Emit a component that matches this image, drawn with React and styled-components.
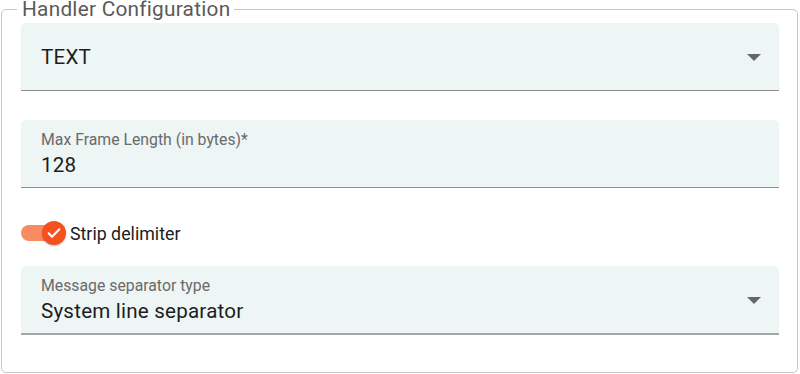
import React from "react";
import styled, { createGlobalStyle } from "styled-components";

const GlobalStyle = createGlobalStyle`
  html, body {
    margin: 0;
    padding: 0;
    background: #fff;
    font-family: Roboto, "Liberation Sans", sans-serif;
  }
`;

function App() {
  return (
    <Page>
      <GlobalStyle />
      <Group>
        <Legend>Handler Configuration</Legend>
        <Field>
          <Value $plain>TEXT</Value>
          <Arrow />
        </Field>

        <Field $gap={29}>
          <Label>Max Frame Length (in bytes)*</Label>
          <Value>128</Value>
        </Field>

        <SwitchRow>
          <Track>
            <Thumb>
              <svg width="16" height="16" viewBox="0 0 24 24">
                <path
                  d="M4 12.5l5 5L20 6.5"
                  fill="none"
                  stroke="#fff"
                  strokeWidth="3.2"
                  strokeLinecap="round"
                  strokeLinejoin="round"
                />
              </svg>
            </Thumb>
          </Track>
          <SwitchText>Strip delimiter</SwitchText>
        </SwitchRow>

        <Field $thick>
          <Label>Message separator type</Label>
          <Value>System line separator</Value>
          <Arrow />
        </Field>
      </Group>
    </Page>
  );
}

export default App;

const Page = styled.div`
  padding: 0 2px 0 1px;
  width: 800px;
  box-sizing: border-box;
`;

const Group = styled.fieldset`
  margin: 0;
  padding: 5px 18px 37px 19px;
  border: 1px solid #c6c6c6;
  border-radius: 5px;
  min-width: 0;
`;

const Legend = styled.legend`
  margin-left: -4px;
  padding: 0 4px 0 5px;
  font-size: 20.8px;
  line-height: 18px;
  letter-spacing: 0.25px;
  color: #5a5a5a;
`;

const Field = styled.div`
  position: relative;
  height: ${(p) => (p.$thick ? "69px" : "68px")};
  margin-top: ${(p) => (p.$gap ? `${p.$gap}px` : "0")};
  background: #eef5f5;
  border-radius: 5px 5px 0 0;
  border-bottom: ${(p) => (p.$thick ? "2px solid #a6a6a6" : "1px solid #8e8e8e")};
  box-sizing: border-box;
  padding: 0 20px;
  display: flex;
  flex-direction: column;
  justify-content: center;
`;

const Label = styled.div`
  font-size: 15.8px;
  line-height: 17px;
  color: #6a6a6a;
  margin-top: -1px;
`;

const Value = styled.div`
  font-size: 20.6px;
  line-height: 22px;
  letter-spacing: 0.2px;
  color: #1d1d1d;
  margin-top: ${(p) => (p.$plain ? "0" : "6px")};
`;

const Arrow = styled.span`
  position: absolute;
  right: 18px;
  top: 50%;
  margin-top: -3px;
  width: 0;
  height: 0;
  border-left: 7px solid transparent;
  border-right: 7px solid transparent;
  border-top: 7px solid #666;
`;

const SwitchRow = styled.div`
  height: 78px;
  padding-top: 12px;
  box-sizing: border-box;
  display: flex;
  align-items: center;
`;

const Track = styled.div`
  position: relative;
  width: 38px;
  height: 16px;
  border-radius: 8px;
  background: #f98b62;
`;

const Thumb = styled.span`
  position: absolute;
  right: -7px;
  top: 50%;
  width: 24px;
  height: 24px;
  margin-top: -12px;
  border-radius: 50%;
  background: #f4511e;
  display: flex;
  align-items: center;
  justify-content: center;
  box-shadow: 0 1px 2px rgba(0, 0, 0, 0.25);
`;

const SwitchText = styled.span`
  margin-left: 11px;
  font-size: 17.8px;
  color: #1d1d1d;
`;
